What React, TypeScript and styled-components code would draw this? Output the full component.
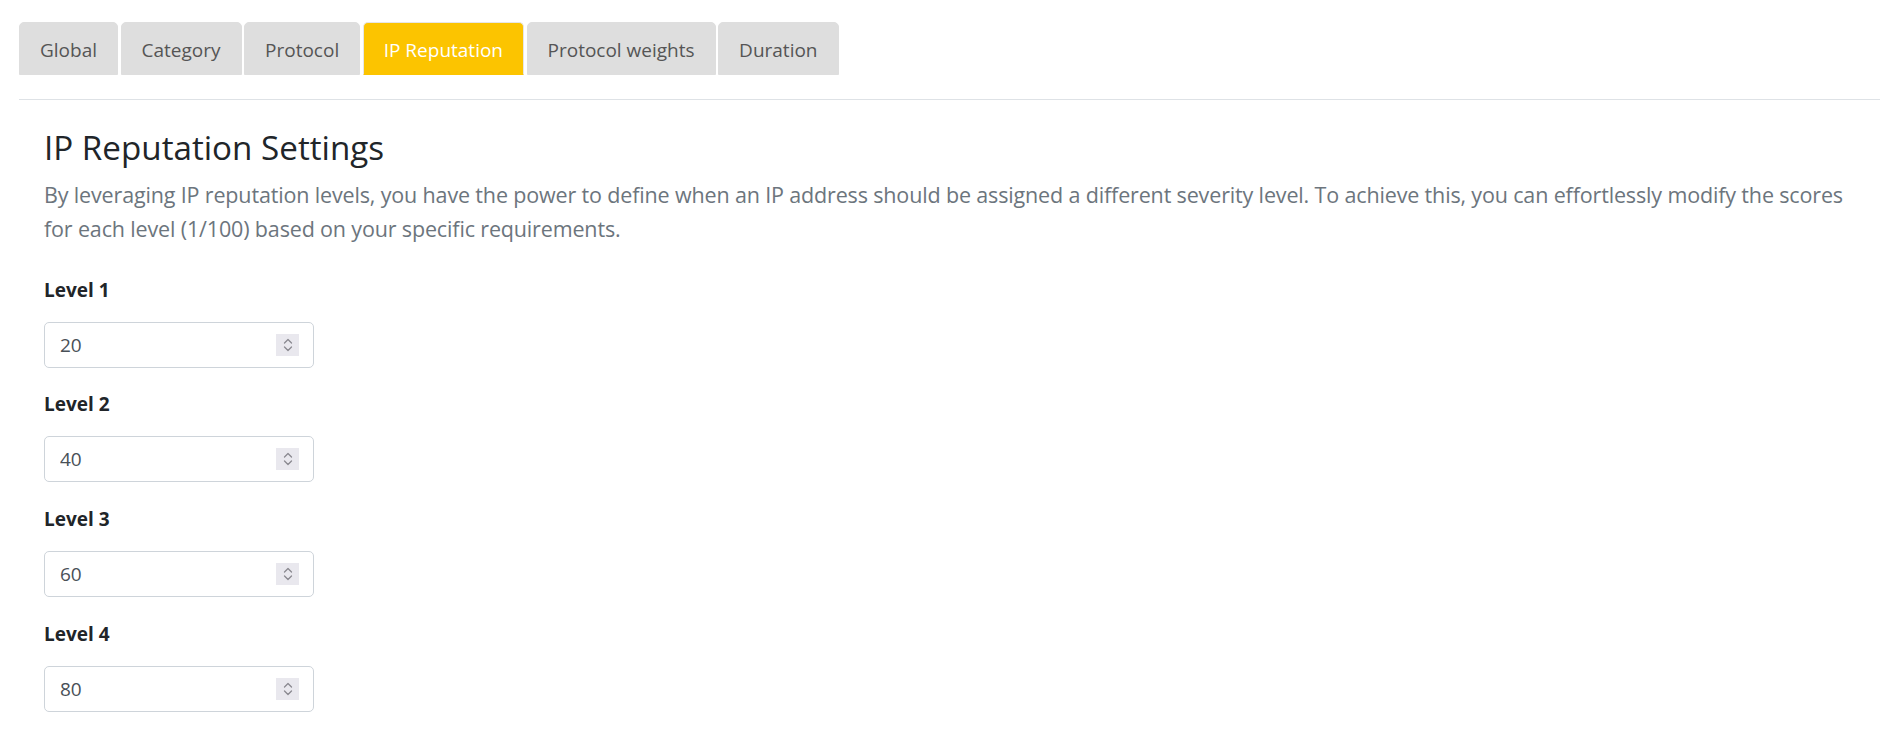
import React from "react";
import styled, { createGlobalStyle } from "styled-components";

const GlobalStyle = createGlobalStyle`
  html, body { margin: 0; padding: 0; background: #ffffff; }
  body { font-family: "Open Sans", "Noto Sans", "Liberation Sans", sans-serif; color: #212529; }
  * { box-sizing: border-box; }
`;

const Page = styled.div`
  padding: 22px 17px 30px 19px;
`;

const TabBar = styled.nav`
  display: flex;
  gap: 2.5px;
  margin-bottom: 24px;
`;

const Tab = styled.button<{ $active?: boolean }>`
  font-family: inherit;
  font-size: 19px;
  line-height: 31px;
  padding: 12px 20px 8px 20px;
  border: 1px solid ${(p) => (p.$active ? "#e6e6e6" : "#dedede")};
  border-bottom-color: ${(p) => (p.$active ? "#fcc400" : "#dedede")};
  border-radius: 5px 5px 0 0;
  background: ${(p) => (p.$active ? "#fcc400" : "#dedede")};
  color: ${(p) => (p.$active ? "#ffffff" : "#555555")};
  cursor: pointer;
`;

const Divider = styled.hr`
  margin: 0;
  border: 0;
  border-top: 1px solid #dee2e6;
`;

const Content = styled.section`
  padding: 28px 25px 0 25px;
`;

const Title = styled.h3`
  margin: 0 0 10px 0;
  font-size: 33.2px;
  font-weight: 400;
  line-height: 1.2;
  color: #212529;
`;

const Lead = styled.p`
  margin: 0 0 29px 0;
  font-size: 21.5px;
  letter-spacing: -0.15px;
  line-height: 34px;
  color: #6c757d;
`;

const Field = styled.div`
  display: flex;
  flex-direction: column;
  align-items: flex-start;
  margin-bottom: 21.6px;
`;

const Label = styled.label`
  font-size: 19px;
  font-weight: 700;
  line-height: 30px;
  margin-bottom: 17px;
  color: #212529;
`;

const InputWrap = styled.div`
  width: 270px;
  height: 46px;
  border: 1px solid #ced4da;
  border-radius: 5px;
  display: flex;
  align-items: center;
`;

const NumberInput = styled.input`
  flex: 1;
  min-width: 0;
  height: 100%;
  border: 0;
  outline: none;
  background: transparent;
  padding: 0 15px;
  font-family: inherit;
  font-size: 19px;
  color: #495057;
  -moz-appearance: textfield;
  &::-webkit-inner-spin-button,
  &::-webkit-outer-spin-button {
    -webkit-appearance: none;
    margin: 0;
  }
`;

const Spinner = styled.div`
  width: 23px;
  height: 22px;
  margin-right: 14px;
  background: #e9e8ee;
  display: flex;
  align-items: center;
  justify-content: center;
`;

const SpinIcon = () => (
  <svg width="12" height="16" viewBox="0 0 12 16" fill="none" stroke="#8a8990" strokeWidth="1.3" strokeLinecap="round" strokeLinejoin="round">
    <path d="M2.5 6 L6 2.5 L9.5 6" />
    <path d="M2.5 10 L6 13.5 L9.5 10" />
  </svg>
);

const tabs = ["Global", "Category", "Protocol", "IP Reputation", "Protocol weights", "Duration"];
const levels = [20, 40, 60, 80];

export default function App() {
  return (
    <Page>
      <GlobalStyle />
      <TabBar>
        {tabs.map((t) => (
          <Tab key={t} $active={t === "IP Reputation"}>
            {t}
          </Tab>
        ))}
      </TabBar>
      <Divider />
      <Content>
        <Title>IP Reputation Settings</Title>
        <Lead>
          By leveraging IP reputation levels, you have the power to define when an IP address should be assigned a
          different severity level. To achieve this, you can effortlessly modify the scores for each level (1/100) based
          on your specific requirements.
        </Lead>
        {levels.map((v, i) => (
          <Field key={i}>
            <Label htmlFor={`level-${i + 1}`}>Level {i + 1}</Label>
            <InputWrap>
              <NumberInput id={`level-${i + 1}`} type="number" defaultValue={v} />
              <Spinner>
                <SpinIcon />
              </Spinner>
            </InputWrap>
          </Field>
        ))}
      </Content>
    </Page>
  );
}
